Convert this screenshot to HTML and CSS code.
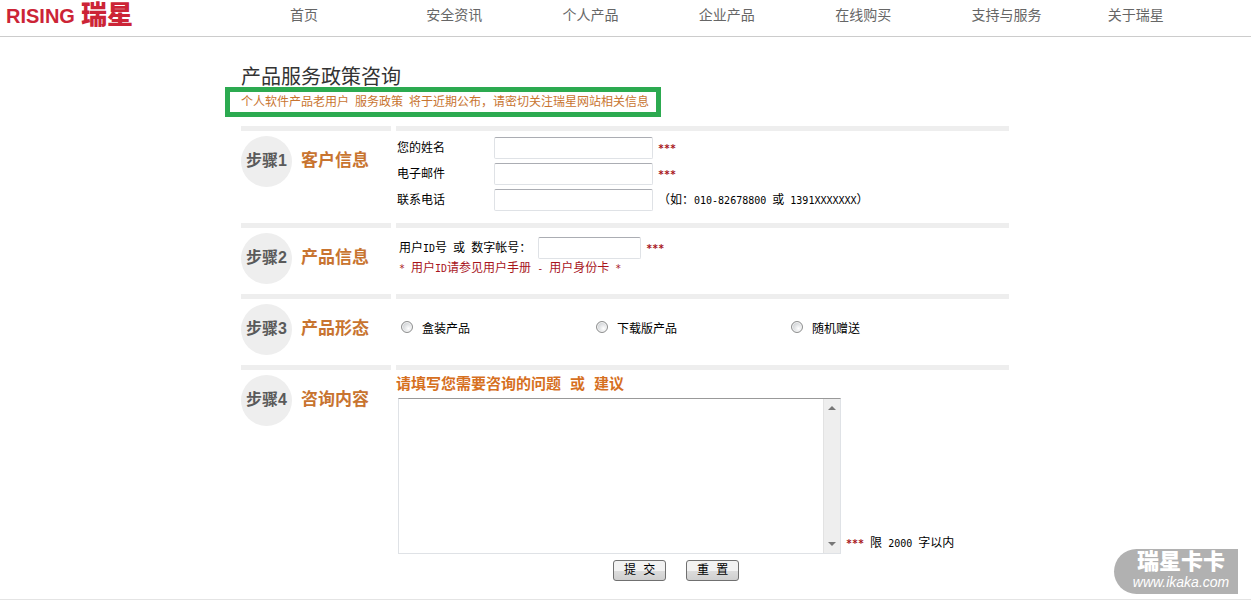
FILE: index.html
```
<!DOCTYPE html>
<html lang="zh-CN">
    <head>
        <meta charset="utf-8">
        <title>产品服务政策咨询</title>
        <link rel="stylesheet" href="styles.css">
    </head>
    <body>
        <header class="top">
            <a class="logo" href="#"><span>RISING</span><span class="logo-cn">瑞星</span></a>
            <nav class="nav">
                <a href="#">首页</a>
                <a href="#">安全资讯</a>
                <a href="#">个人产品</a>
                <a href="#">企业产品</a>
                <a href="#">在线购买</a>
                <a href="#">支持与服务</a>
                <a href="#">关于瑞星</a>
            </nav>
        </header>

        <main class="page">
            <h1>产品服务政策咨询</h1>
            <p class="notice">个人软件产品老用户<span class="half"> </span>服务政策<span class="half"> </span>将于近期公布，请密切关注瑞星网站相关信息</p>

            <form>
                <section class="step step-first">
                    <h2 class="step-title"><span class="circle">步骤1</span>客户信息</h2>
                    <div class="step-body contact">
                        <div class="row">
                            <label for="name">您的姓名</label>
                            <input class="text" id="name" type="text">
                            <span class="must">***</span>
                        </div>
                        <div class="row">
                            <label for="email">电子邮件</label>
                            <input class="text" id="email" type="text">
                            <span class="must">***</span>
                        </div>
                        <div class="row">
                            <label for="phone">联系电话</label>
                            <input class="text" id="phone" type="text">
                            <span>（如：<span class="half">010-82678800 </span>或<span class="half"> 1391XXXXXXX</span>）</span>
                        </div>
                    </div>
                </section>

                <section class="step">
                    <h2 class="step-title"><span class="circle">步骤2</span>产品信息</h2>
                    <div class="step-body product">
                        <div class="row">
                            <label for="uid">用户<span class="half">ID</span>号<span class="half"> </span>或<span class="half"> </span>数字帐号：</label>
                            <input class="text text-short" id="uid" type="text">
                            <span class="must">***</span>
                        </div>
                        <p class="hint"><span class="half">* </span>用户<span class="half">ID</span>请参见用户手册<span class="half"> - </span>用户身份卡<span class="half"> *</span></p>
                    </div>
                </section>

                <section class="step">
                    <h2 class="step-title"><span class="circle">步骤3</span>产品形态</h2>
                    <div class="step-body kinds">
                        <label><input type="radio" name="kind">盒装产品</label>
                        <label><input type="radio" name="kind">下载版产品</label>
                        <label><input type="radio" name="kind">随机赠送</label>
                    </div>
                </section>

                <section class="step">
                    <h2 class="step-title"><span class="circle">步骤4</span>咨询内容</h2>
                    <div class="step-body">
                        <label class="ask" for="question">请填写您需要咨询的问题 或 建议</label>
                        <div class="answer">
                            <div class="answer-row">
                                <div class="box">
                                    <textarea id="question"></textarea>
                                    <div class="scroll">
                                        <svg width="8" height="4"><path d="M0 4L4 0L8 4Z"/></svg>
                                        <svg width="8" height="4"><path d="M0 0L4 4L8 0Z"/></svg>
                                    </div>
                                </div>
                                <span><span class="must">***</span><span class="half"> </span>限<span class="half"> 2000 </span>字以内</span>
                            </div>
                            <div class="buttons">
                                <button type="submit">提 交</button>
                                <button type="reset">重 置</button>
                            </div>
                        </div>
                    </div>
                </section>
            </form>
        </main>

        <a class="mark" href="#"><span class="mark-cn">瑞星卡卡</span><span class="mark-url">www.ikaka.com</span></a>
    </body>
</html>
```
FILE: styles.css
```
:root {
    --bar: #eeeeee;
    --orange: #c87430;
    --red: #a8141c;
}

* {
    box-sizing: border-box;
}

body {
    margin: 0;
    position: relative;
    color: #000;
    background: #fff;
    font: 12px/20px "Liberation Mono", "Noto Sans CJK SC", sans-serif;
    border-bottom: 1px solid #e4e4e4;
}

h1, h2, p {
    margin: 0;
    font-weight: normal;
}

a {
    color: inherit;
    text-decoration: none;
}

/** header */
.top {
    display: grid;
    grid-template-columns: 290px 1fr;
    height: 37px;
    padding-right: 7px;
    border-bottom: 1px solid #ccc;
}

.logo {
    display: flex;
    gap: 6px;
    padding-left: 6px;
    color: #cc2436;
    font: 900 20px/32px "Liberation Sans", "Noto Sans CJK SC", sans-serif;
}

.logo-cn {
    font-size: 26px;
    line-height: 31px;
}

.nav {
    display: grid;
    grid-template-columns: repeat(7, 1fr);
    color: #666;
    font-size: 14px;
    line-height: 32px;
    white-space: nowrap;
}

/** page */
.page {
    max-width: 769px;
    margin: 0 auto;
    padding: 30px 1px 18px 0;
}

h1 {
    color: #333;
    font-size: 20px;
    line-height: 24px;
}

.notice {
    width: fit-content;
    margin: -4px 0 9px -16px;
    padding: 0 7px 0 11px;
    color: var(--orange);
    border: 5px solid #2caa50;
    line-height: 22px;
    height: 30px;
}

.half {
    font-family: "DejaVu Sans Mono", monospace;
    font-size: 10px;
    white-space: pre;
}

.must {
    color: var(--red);
    font-family: "DejaVu Sans Mono", monospace;
    font-size: 10px;
    font-weight: bold;
}

/** steps */
.step {
    display: grid;
    grid-template-columns: 150px 1fr;
    column-gap: 5px;
    min-height: 71px;
}

.step-first {
    min-height: 97px;
}

.step-title, .step-body {
    border-top: 5px solid var(--bar);
}

.step-title {
    display: flex;
    gap: 9px;
    padding-top: 5px;
    color: var(--orange);
    font-size: 17px;
    font-weight: bold;
    line-height: 51px;
}

.circle {
    width: 51px;
    height: 51px;
    border-radius: 50%;
    background: var(--bar);
    color: #5a5a5a;
    font: bold 16px/50px "Liberation Sans", "Noto Sans CJK SC", sans-serif;
    text-align: center;
}

.row {
    display: flex;
    align-items: center;
    gap: 5px;
}

.contact {
    padding: 4px 0 0 1px;
}

.contact .row {
    height: 26px;
}

.contact label {
    width: 92px;
}

.row label, .row span {
    padding-top: 2px;
}

.row .half {
    padding: 0;
}

.product {
    padding: 9px 0 0 3px;
}

.hint {
    color: var(--red);
}

.text {
    width: 159px;
    height: 22px;
    border: 1px solid #dfe2e6;
    border-top-color: #abadb3;
    border-radius: 2px;
    font: inherit;
}

.text-short {
    width: 103px;
    margin-left: 2px;
}

.kinds {
    display: grid;
    grid-template-columns: repeat(3, 195px);
    align-content: start;
    padding: 18px 0 0 5px;
}

.kinds label {
    display: flex;
    gap: 9px;
    line-height: 26px;
}

.kinds input {
    appearance: none;
    width: 12px;
    height: 12px;
    margin: 4px 0;
    border: 1px solid #8e8f8f;
    border-radius: 50%;
    background: radial-gradient(circle at 65% 65%, #fff, #bcc0c4);
    box-shadow: inset 0 0 0 1px #f4f4f4;
}

.kinds input:checked {
    background: #336699;
}

.ask {
    display: block;
    height: 28px;
    color: #d6701f;
    font-size: 15px;
    font-weight: bold;
    line-height: 31px;
}

.answer {
    width: fit-content;
    padding-left: 2px;
}

.answer-row {
    display: flex;
    align-items: flex-end;
    gap: 5px;
}

.box {
    display: flex;
    width: 443px;
    height: 156px;
    border: 1px solid #dfe2e6;
    border-top-color: #999;
}

textarea {
    flex: 1;
    border: 0;
    overflow: auto;
    resize: none;
    font: inherit;
}

.scroll {
    display: flex;
    flex-direction: column;
    justify-content: space-between;
    align-items: center;
    width: 17px;
    padding: 7px 0;
    background: #eeeeee;
    border-left: 1px solid #e2e2e2;
    fill: #777;
}

.buttons {
    display: flex;
    justify-content: center;
    gap: 20px;
    padding-top: 6px;
}

button {
    width: 53px;
    height: 21px;
    padding: 0;
    border: 1px solid #707070;
    border-radius: 3px;
    background: linear-gradient(#f2f2f2 50%, #dddddd 50%, #cfcfcf);
    color: #000;
    font: inherit;
    line-height: 18px;
}

/** site mark in the corner */
.mark {
    position: absolute;
    right: 13px;
    bottom: 5px;
    display: flex;
    flex-direction: column;
    align-items: center;
    width: 124px;
    height: 45px;
    padding: 4px 0 0 10px;
    border-radius: 23px 0 0 23px;
    background: #b1b1b1;
    color: #fff;
}

.mark-cn {
    font-size: 22px;
    font-weight: 900;
    line-height: 22px;
}

.mark-url {
    font: italic 14px/14px "Liberation Sans", sans-serif;
}
```
